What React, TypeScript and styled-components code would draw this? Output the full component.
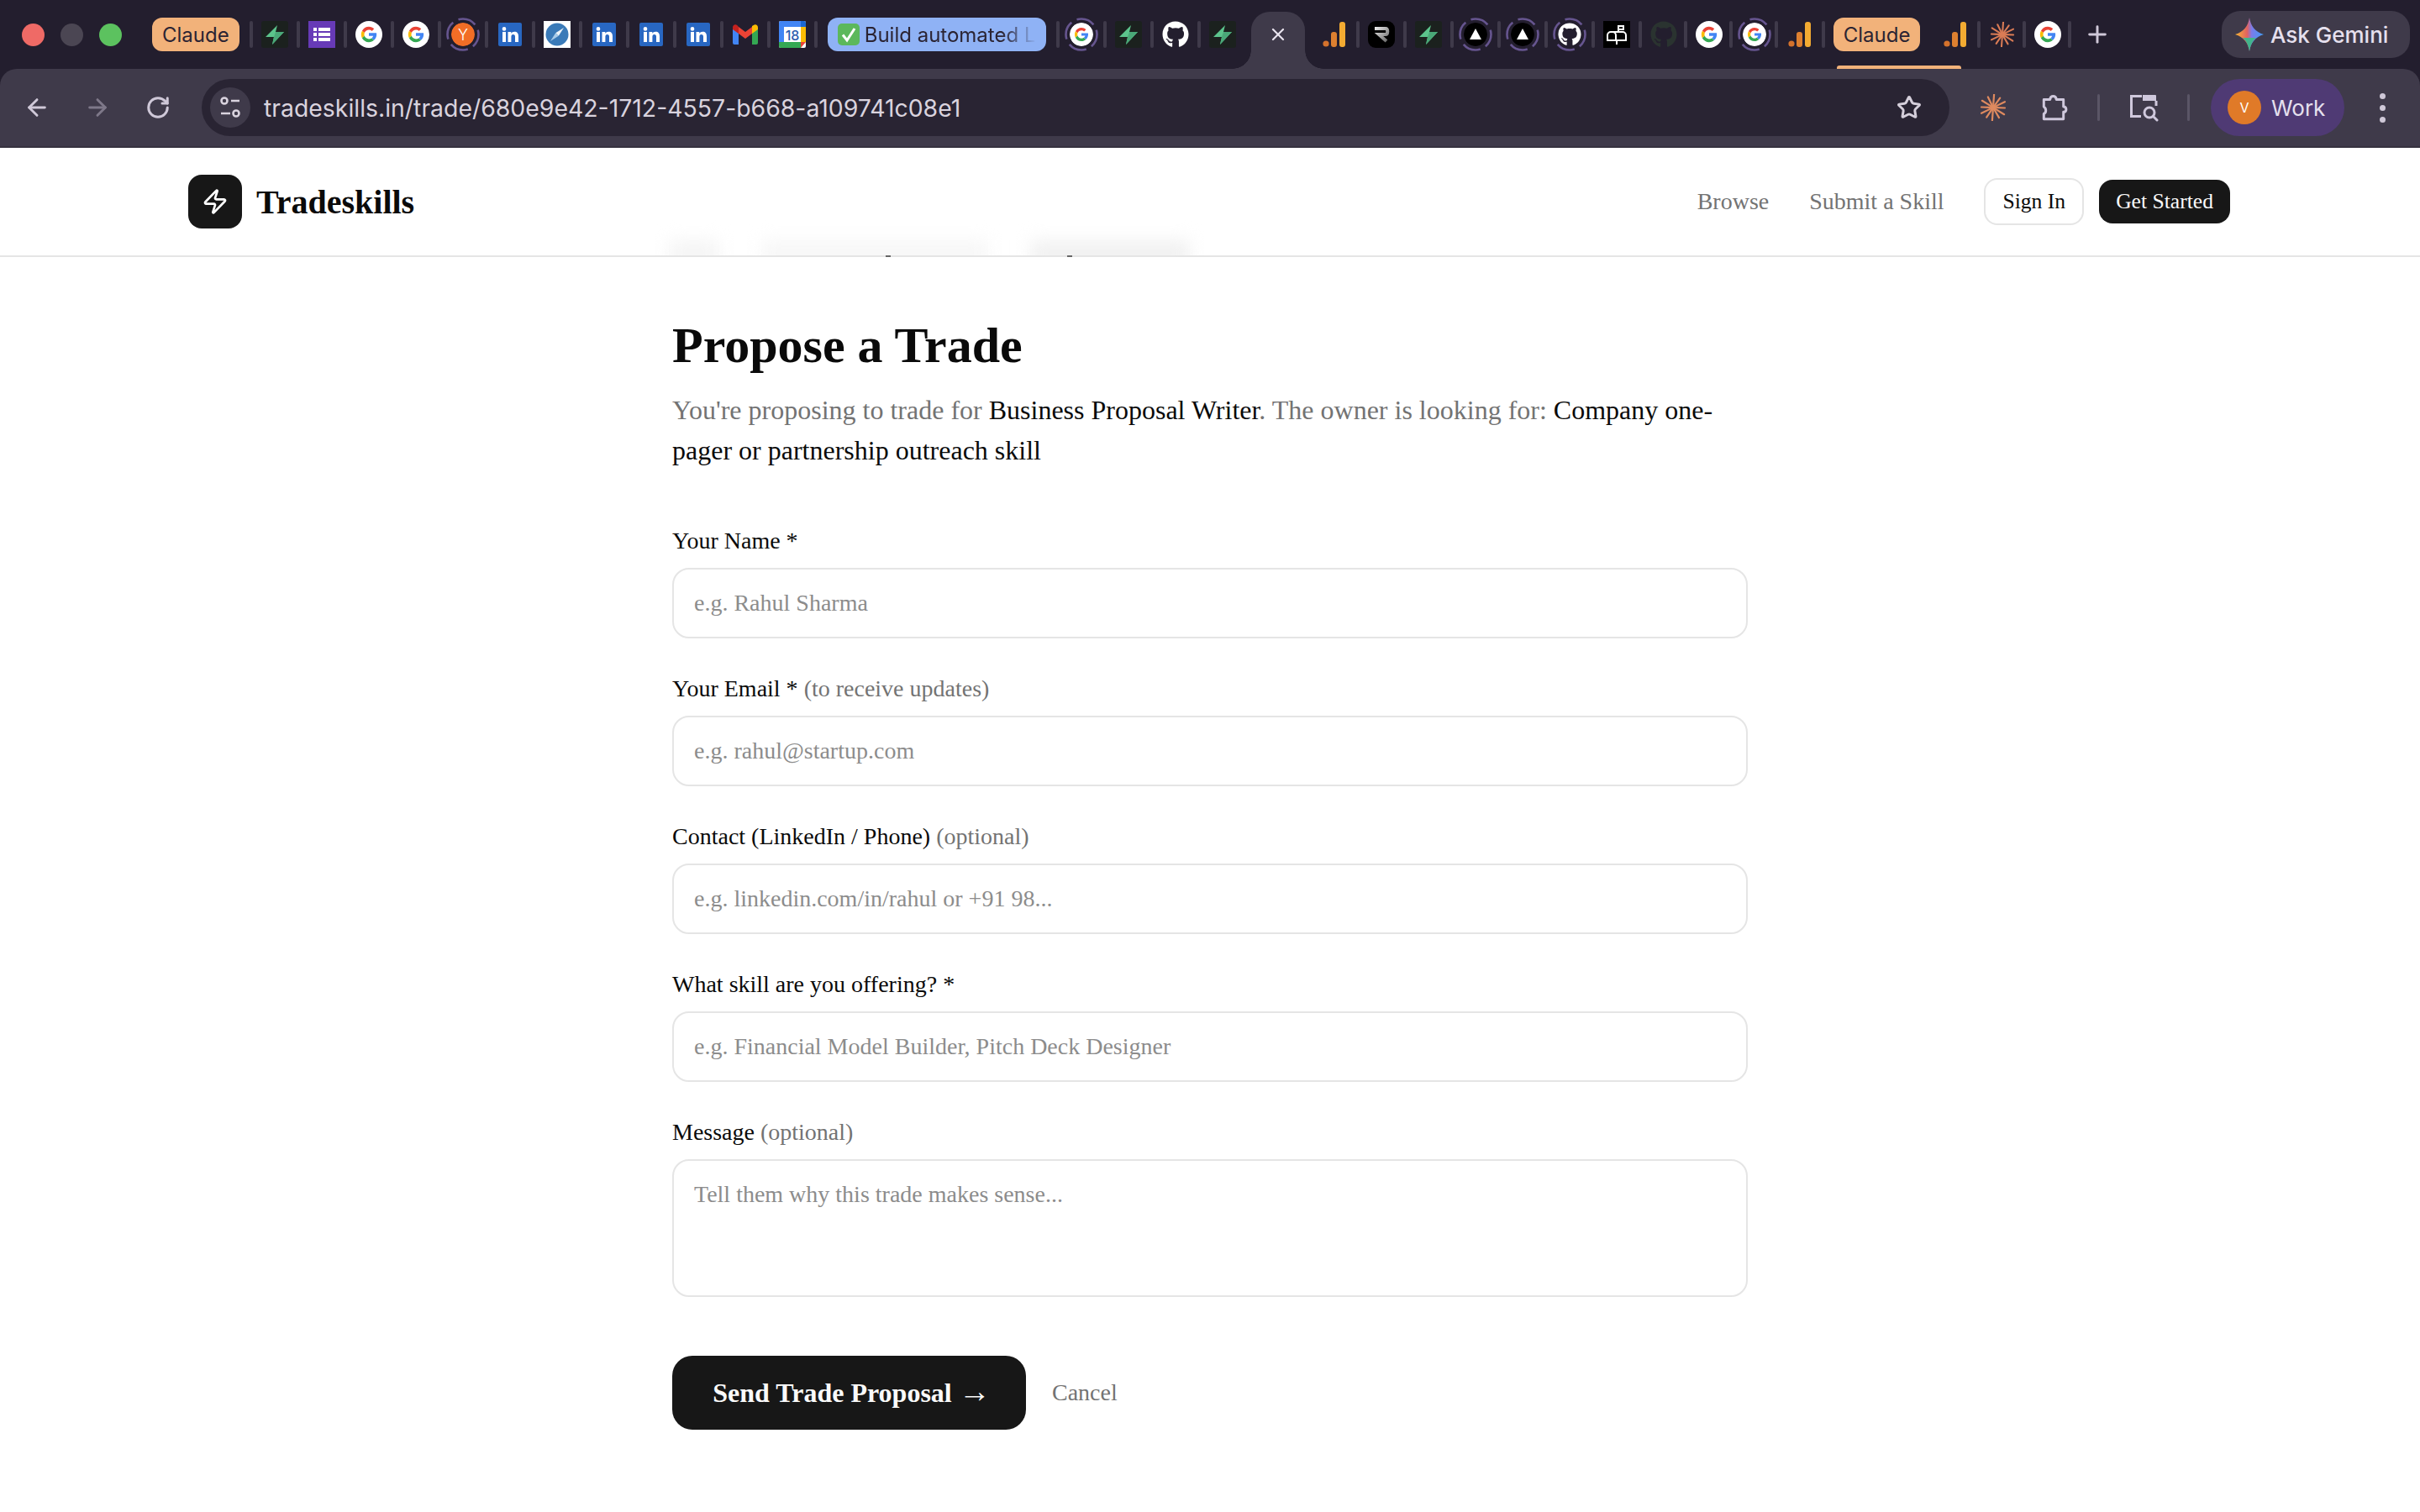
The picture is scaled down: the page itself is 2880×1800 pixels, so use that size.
import React from "react";
import styled, { createGlobalStyle } from "styled-components";
import { ArrowLeft, ArrowRight, Plus, RotateCw, Star, X, Zap } from "lucide-react";
import { FaGithub } from "react-icons/fa";

const GlobalStyle = createGlobalStyle`
  html, body {
    margin: 0;
    padding: 0;
    background: #fff;
  }
  body {
    width: 2880px;
    height: 1800px;
    overflow: hidden;
  }
  * {
    box-sizing: border-box;
  }
`;

const Frame = styled.div`
  width: 2880px;
  height: 1800px;
  display: flex;
  flex-direction: column;
  overflow: hidden;
`;

/* browser chrome */
const TabBar = styled.div`
  height: 82px;
  flex: none;
  display: flex;
  align-items: center;
  gap: 10px;
  padding: 0 12px 0 26px;
  background: #231e2e;
  font-family: Inter, "Noto Sans", sans-serif;
`;

const Lights = styled.div`
  display: flex;
  gap: 19px;
  margin-right: 24px;
`;

const Light = styled.span<{ $color: string }>`
  width: 27px;
  height: 27px;
  border-radius: 50%;
  background: ${(p) => p.$color};
`;

const Sep = styled.span<{ $tight?: boolean }>`
  width: 4px;
  height: 32px;
  flex: none;
  margin-left: ${(p) => (p.$tight ? -2 : 0)}px;
  border-radius: 2px;
  background: #3f3a4a;
`;

const GroupPill = styled.div<{ $bg: string }>`
  height: 40px;
  flex: none;
  display: flex;
  align-items: center;
  gap: 6px;
  padding: 0 12px;
  margin: 0 2px;
  border-radius: 12px;
  background: ${(p) => p.$bg};
  color: #2b2433;
  font-size: 24px;
  white-space: nowrap;
  overflow: hidden;
`;

const FadeText = styled.span`
  width: 204px;
  overflow: hidden;
  -webkit-mask-image: linear-gradient(90deg, #000 80%, transparent 100%);
  mask-image: linear-gradient(90deg, #000 80%, transparent 100%);
`;

const Fav = styled.span`
  position: relative;
  width: 32px;
  height: 32px;
  flex: none;
  display: flex;
  align-items: center;
  justify-content: center;
  svg {
    display: block;
  }
`;

const RingMark = styled.svg`
  position: absolute;
  left: -4px;
  top: -4px;
`;

const Shrunk = styled.span`
  width: 28px;
  height: 28px;
  display: flex;
  border-radius: 50%;
  overflow: hidden;
`;

const ActiveTab = styled.div`
  position: relative;
  align-self: flex-end;
  width: 64px;
  height: 68px;
  margin: 0 9px 0 8px;
  flex: none;
  display: flex;
  align-items: flex-start;
  justify-content: center;
  padding-top: 15px;
  border-radius: 22px 22px 0 0;
  background: #3f3a4a;
  color: #e8e3ee;
  &::before,
  &::after {
    content: "";
    position: absolute;
    bottom: 0;
    width: 22px;
    height: 22px;
  }
  &::before {
    left: -22px;
    background: radial-gradient(circle at 0 0, transparent 21.5px, #3f3a4a 22px);
  }
  &::after {
    right: -22px;
    background: radial-gradient(circle at 100% 0, transparent 21.5px, #3f3a4a 22px);
  }
`;

const ClaudeGroup = styled.div`
  position: relative;
  align-self: stretch;
  display: flex;
  align-items: center;
  gap: 24px;
  margin-left: -2px;
  &::after {
    content: "";
    position: absolute;
    left: 6px;
    right: 9px;
    bottom: 0;
    height: 4px;
    border-radius: 3px 3px 0 0;
    background: #f2b27a;
  }
`;

const NewTab = styled.span`
  display: flex;
  margin-left: 5px;
  color: #cfc8d8;
`;

const AskGemini = styled.div`
  margin-left: auto;
  height: 56px;
  width: 224px;
  flex: none;
  display: flex;
  align-items: center;
  gap: 8px;
  padding: 0 16px;
  border-radius: 22px;
  background: #3f3a4a;
  color: #e6e0ee;
  font-size: 26px;
  font-weight: 500;
  white-space: nowrap;
`;

const Toolbar = styled.div`
  height: 94px;
  flex: none;
  display: flex;
  align-items: center;
  padding: 0 0 2px 8px;
  background: #231e2e;
  font-family: Inter, "Noto Sans", sans-serif;
  position: relative;
  &::before {
    content: "";
    position: absolute;
    inset: 0;
    border-radius: 20px 20px 0 0;
    background: #3f3a4a;
    border-bottom: 2px solid #36323f;
  }
  & > * {
    position: relative;
  }
`;

const ToolButton = styled.span<{ $dim?: boolean; $color?: string }>`
  width: 72px;
  height: 68px;
  flex: none;
  display: flex;
  align-items: center;
  justify-content: center;
  color: ${(p) => p.$color ?? (p.$dim ? "#7e7889" : "#cfc8d8")};
`;

const Omnibox = styled.div`
  width: 2080px;
  height: 68px;
  flex: none;
  display: flex;
  align-items: center;
  gap: 16px;
  margin: 0 16px;
  padding: 0 33px 0 10px;
  border-radius: 34px;
  background: #292433;
  color: #d9d3de;
`;

const SiteInfo = styled.span`
  width: 48px;
  height: 48px;
  flex: none;
  display: flex;
  align-items: center;
  justify-content: center;
  border-radius: 50%;
  background: #3f3a4a;
`;

const Url = styled.span`
  flex: 1;
  font-size: 28.4px;
  white-space: nowrap;
`;

const ToolSep = styled.span`
  width: 3px;
  height: 32px;
  flex: none;
  margin: 0 16px;
  border-radius: 2px;
  background: #5a5566;
`;

const Profile = styled.div`
  width: 159px;
  height: 68px;
  flex: none;
  display: flex;
  align-items: center;
  gap: 12px;
  margin-left: 9px;
  padding-left: 20px;
  border-radius: 34px;
  background: #4f3a74;
  color: #e6e0ee;
  font-size: 26px;
`;

const Avatar = styled.span`
  width: 40px;
  height: 40px;
  display: flex;
  align-items: center;
  justify-content: center;
  border-radius: 50%;
  background: #e07a28;
  color: #fff;
  font-size: 16px;
`;

const Dots = styled.span`
  width: 72px;
  height: 68px;
  margin-left: 9px;
  display: flex;
  flex-direction: column;
  align-items: center;
  justify-content: center;
  gap: 7px;
  i {
    width: 7px;
    height: 7px;
    border-radius: 50%;
    background: #cfc8d8;
  }
`;

/* page */
const Page = styled.div`
  flex: 1;
  background: #fff;
  color: #0a0a0a;
  font-family: "Liberation Serif", "Times New Roman", serif;
`;

const Header = styled.header`
  position: relative;
  height: 130px;
  display: flex;
  align-items: center;
  justify-content: space-between;
  padding: 0 226px 0 224px;
  border-bottom: 2px solid #e5e5e5;
`;

const Brand = styled.div`
  position: relative;
  display: flex;
  align-items: center;
  gap: 17px;
  font-size: 40px;
  font-weight: 700;
`;

const BrandMark = styled.span`
  width: 64px;
  height: 64px;
  display: flex;
  align-items: center;
  justify-content: center;
  border-radius: 16px;
  background: #171717;
  color: #fff;
`;

const Ghost = styled.div`
  position: absolute;
  inset: 0;
  overflow: hidden;
  pointer-events: none;
`;

const GhostRow = styled.div`
  position: absolute;
  left: 796px;
  bottom: -12px;
  display: flex;
  filter: blur(10px);
`;

const GhostBlock = styled.span<{ $w: number; $gap: number; $tone: string }>`
  width: ${(p) => p.$w}px;
  height: 30px;
  margin-right: ${(p) => p.$gap}px;
  background: ${(p) => p.$tone};
`;

const Descenders = styled.div`
  position: absolute;
  left: 1054px;
  top: 100%;
  display: flex;
  gap: 210px;
  i {
    width: 6px;
    height: 2px;
    background: #666;
  }
`;

const Nav = styled.nav`
  position: relative;
  display: flex;
  align-items: center;
  gap: 48px;
  font-size: 28px;
  color: #737373;
`;

const NavButtons = styled.div`
  display: flex;
  align-items: center;
  gap: 18px;
`;

const NavButton = styled.span<{ $dark?: boolean }>`
  height: ${(p) => (p.$dark ? 52 : 56)}px;
  display: flex;
  align-items: center;
  padding: 0 20px;
  border-radius: 16px;
  border: ${(p) => (p.$dark ? "none" : "2px solid #e5e5e5")};
  background: ${(p) => (p.$dark ? "#171717" : "#fff")};
  color: ${(p) => (p.$dark ? "#fafafa" : "#0a0a0a")};
  font-size: 25.6px;
`;

const Main = styled.main`
  width: 1280px;
  margin: 0 auto;
  padding-top: 72px;
`;

const Title = styled.h1`
  margin: 0 0 20px;
  font-size: 60px;
  line-height: 66px;
  font-weight: 700;
`;

const Lead = styled.p`
  margin: 0 0 62px;
  font-size: 32px;
  line-height: 48px;
  color: #737373;
  strong {
    font-weight: 400;
    color: #0a0a0a;
  }
`;

const Form = styled.form`
  display: flex;
  flex-direction: column;
  gap: 38px;
`;

const Field = styled.label`
  display: flex;
  flex-direction: column;
  gap: 10px;
`;

const LabelText = styled.span`
  font-size: 28px;
  line-height: 44px;
  small {
    font-size: 28px;
    color: #737373;
  }
`;

const fieldStyles = `
  width: 100%;
  border: 2px solid #e5e5e5;
  border-radius: 20px;
  background: #fff;
  font-family: "Liberation Serif", "Times New Roman", serif;
  font-size: 28px;
  outline: none;
  &::placeholder {
    color: #8c8c8c;
    opacity: 1;
  }
`;

const TextInput = styled.input`
  ${fieldStyles}
  height: 84px;
  padding: 0 24px;
`;

const TextArea = styled.textarea`
  ${fieldStyles}
  height: 164px;
  padding: 22px 24px;
  line-height: 36px;
  resize: none;
  display: block;
`;

const Actions = styled.div`
  display: flex;
  align-items: center;
  gap: 31px;
  margin-top: 32px;
`;

const SendButton = styled.button`
  width: 421px;
  height: 88px;
  border: 0;
  border-radius: 24px;
  background: #171717;
  color: #fafafa;
  font-family: "Liberation Serif", "Times New Roman", serif;
  font-size: 32px;
  font-weight: 700;
  span {
    font-size: 38px;
    line-height: 0;
    font-weight: 400;
    margin-right: -6px;
  }
`;

const CancelLink = styled.span`
  font-size: 28px;
  color: #737373;
`;

/* favicons */
const GoogleFav = () => (
  <svg width="32" height="32" viewBox="0 0 32 32">
    <circle cx="16" cy="16" r="16" fill="#fff" />
    <g transform="translate(5 5) scale(0.458)">
      <path fill="#EA4335" d="M6.306 14.691l6.571 4.819C14.655 15.108 18.961 12 24 12c3.059 0 5.842 1.154 7.961 3.039l5.657-5.657C34.046 6.053 29.268 4 24 4 16.318 4 9.656 8.337 6.306 14.691z" />
      <path fill="#FBBC05" d="M4 24c0 3.3.8 6.4 2.2 9.08l6.52-5.03A12 12 0 0 1 12 24c0-1.6.32-3.1.88-4.49l-6.57-4.82A19.9 19.9 0 0 0 4 24z" />
      <path fill="#34A853" d="M24 44c5.166 0 9.86-1.977 13.409-5.192l-6.19-5.238A11.91 11.91 0 0 1 24 36c-5.202 0-9.619-3.317-11.283-7.946l-6.522 5.025C9.505 39.556 16.227 44 24 44z" />
      <path fill="#4285F4" d="M43.611 20.083H42V20H24v8h11.303a12.04 12.04 0 0 1-4.087 5.571l6.193 5.237C36.971 39.205 44 34 44 24c0-1.341-.138-2.65-.389-3.917z" />
    </g>
  </svg>
);

const SupabaseFav = () => (
  <svg width="32" height="32" viewBox="0 0 32 32">
    <rect width="32" height="32" rx="3" fill="#1b211e" />
    <path d="M19 5 5 19h10l-2 9 14-15H17z" fill="#5cc48c" />
    <path d="M15 19l-2 9 14-15H17z" fill="#4aa878" />
  </svg>
);

const FormsFav = () => (
  <svg width="32" height="32" viewBox="0 0 32 32">
    <rect width="32" height="32" fill="#673ab7" />
    <g fill="#fff">
      <rect x="6" y="8" width="4" height="4" />
      <rect x="12" y="8" width="14" height="4" />
      <rect x="6" y="14" width="4" height="4" />
      <rect x="12" y="14" width="14" height="4" />
      <rect x="6" y="20" width="4" height="4" />
      <rect x="12" y="20" width="14" height="4" />
    </g>
  </svg>
);

const YcFav = () => (
  <svg width="28" height="28" viewBox="0 0 28 28">
    <circle cx="14" cy="14" r="14" fill="#f26d26" />
    <text x="14" y="20.5" textAnchor="middle" fontSize="18" fontFamily="Inter, sans-serif" fontWeight="300" fill="#fff">
      Y
    </text>
  </svg>
);

const LinkedInFav = () => (
  <svg width="28" height="28" viewBox="0 0 28 28">
    <rect width="28" height="28" rx="2" fill="#2867c2" />
    <g fill="#fff">
      <circle cx="7" cy="7.4" r="2.3" />
      <rect x="5" y="11" width="4" height="12" />
      <path d="M11.5 11h3.8v1.7c.8-1.3 2.2-2 3.9-2 3.3 0 4.8 2 4.8 5.3V23h-4v-6.2c0-1.8-.7-2.8-2.3-2.8s-2.3 1.1-2.3 2.9V23h-3.9z" />
    </g>
  </svg>
);

const SafariFav = () => (
  <svg width="32" height="32" viewBox="0 0 32 32">
    <rect width="32" height="32" fill="#fff" />
    <circle cx="16" cy="16" r="13.5" fill="#3a7ab8" />
    <path d="M24 8 17.8 17.8 14.2 14.2z" fill="#fff" opacity=".9" />
    <path d="M8 24 14.2 14.2 17.8 17.8z" fill="#a9cbe8" />
  </svg>
);

const GmailFav = () => (
  <svg width="30" height="24" viewBox="0 0 30 24">
    <path d="M0 5v17a2 2 0 0 0 2 2h5V10z" fill="#4285f4" />
    <path d="M30 5v17a2 2 0 0 1-2 2h-5V10z" fill="#34a853" />
    <path d="M23 2v9l7-5V4c0-3.4-3-4.6-5.2-3z" fill="#fbbc04" />
    <path d="M7 11V3l8 6 8-6v8l-8 6z" fill="#ea4335" />
    <path d="M0 4v2l7 5V3L5.2 1C3 -.6 0 .6 0 4z" fill="#c5221f" />
  </svg>
);

const CalendarFav = () => (
  <svg width="32" height="32" viewBox="0 0 32 32">
    <rect width="32" height="32" rx="2" fill="#fff" />
    <path d="M0 7V2a2 2 0 0 1 2-2h24v7z" fill="#4285f4" />
    <path d="M26 0h4a2 2 0 0 1 2 2v5h-6z" fill="#1a67d2" />
    <rect x="26" y="7" width="6" height="18" fill="#fbbc04" />
    <rect y="7" width="6" height="18" fill="#4285f4" />
    <path d="M0 25h26v7H2a2 2 0 0 1-2-2z" fill="#34a853" />
    <path d="M26 32v-7h6z" fill="#ea4335" />
    <text x="16" y="22.5" textAnchor="middle" fontSize="16" fontFamily="Inter, sans-serif" fill="#2a5db0" fontWeight="500">
      18
    </text>
  </svg>
);

const AnalyticsFav = () => (
  <svg width="28" height="32" viewBox="0 0 28 32">
    <circle cx="4" cy="27" r="3.6" fill="#d4722c" />
    <rect x="10" y="13" width="7" height="18" rx="3" fill="#dd8030" />
    <rect x="20" y="1" width="7" height="30" rx="3" fill="#f3ab32" />
  </svg>
);

const RFav = () => (
  <svg width="32" height="32" viewBox="0 0 32 32">
    <defs>
      <linearGradient id="rGrad" x1="0" y1="0" x2="1" y2="1">
        <stop offset="0" stopColor="#e8e8e8" />
        <stop offset="1" stopColor="#6b6b6b" />
      </linearGradient>
    </defs>
    <rect width="32" height="32" rx="9" fill="#000" />
    <path d="M8 9h13c3 0 3 7 0 7h-8l9 8" fill="none" stroke="url(#rGrad)" strokeWidth="4" />
  </svg>
);

const VercelFav = () => (
  <svg width="28" height="28" viewBox="0 0 28 28">
    <circle cx="14" cy="14" r="14" fill="#000" />
    <path d="M14 7 21 20H7z" fill="#fff" />
  </svg>
);

const GithubFav = ({ color = "#fff", size = 32 }: { color?: string; size?: number }) => (
  <FaGithub size={size} color={color} />
);

const MailboxFav = () => (
  <svg width="32" height="32" viewBox="0 0 32 32">
    <rect width="32" height="32" fill="#000" />
    <path d="M9 13h14a4 4 0 0 1 4 4v6H5v-6a4 4 0 0 1 4-4zM11 13a4 4 0 0 1 4 4v6M18 14V6h6v4h-6M16 23v5" fill="none" stroke="#fff" strokeWidth="2" />
  </svg>
);

const Burst = ({ size = 30, color = "#d97b55" }: { size?: number; color?: string }) => (
  <svg width={size} height={size} viewBox="0 0 32 32">
    {[4, 36, 64, 92, 122, 150, 184, 214, 244, 272, 302, 334].map((a, i) => (
      <line
        key={a}
        x1="16"
        y1={i % 3 ? 14 : 12}
        x2="16"
        y2={i % 2 ? 2 : 0.5}
        stroke={color}
        strokeWidth="2.2"
        strokeLinecap="round"
        transform={`rotate(${a} 16 16)`}
      />
    ))}
    <circle cx="16" cy="16" r="3.5" fill={color} />
  </svg>
);

const Ring = () => (
  <RingMark width="40" height="40" viewBox="0 0 40 40">
    <circle cx="20" cy="20" r="18.5" fill="none" stroke="#66558f" strokeWidth="2.6" strokeDasharray="22 7" strokeDashoffset="6" />
  </RingMark>
);

const GeminiStar = () => (
  <svg width="34" height="40" viewBox="0 0 34 40">
    <defs>
      <linearGradient id="gemGrad" x1="0" y1="0" x2="1" y2="0">
        <stop offset="0" stopColor="#f7b733" />
        <stop offset="0.42" stopColor="#e2625f" />
        <stop offset="0.58" stopColor="#7b7bea" />
        <stop offset="1" stopColor="#3f9cf5" />
      </linearGradient>
    </defs>
    <path d="M17 0c1.5 10 7 17 17 20-10 3-15.500 10-17 20C15.500 30 10 23 0 20 10 17 15.500 10 17 0z" fill="url(#gemGrad)" />
    <path d="M9 24c4 3 6.500 8 8 16 1.500-8 4-13 8-16z" fill="#41b58c" />
  </svg>
);

const CheckBox = () => (
  <svg width="26" height="26" viewBox="0 0 26 26">
    <rect width="26" height="26" rx="5" fill="#5cb85c" />
    <path d="M6 13.500 11 20 20 6" fill="none" stroke="#fff" strokeWidth="3" />
  </svg>
);

const SiteTune = () => (
  <svg width="26" height="28" viewBox="0 0 26 28" fill="none" stroke="#d9d3de" strokeWidth="2.6">
    <circle cx="6" cy="6" r="3.500" />
    <path d="M14 6h10M2 21h11" />
    <circle cx="20" cy="21" r="3.500" />
  </svg>
);

const PuzzleIcon = () => (
  <svg width="34" height="34" viewBox="0 0 32 32" fill="#cfc8dc" stroke="#cfc8dc" strokeWidth="2.8" strokeLinejoin="round">
    <path fill="none" d="M5 7h7c0-5 7-5 7 0h8v8c4 0 4 6 0 6v8H5v-6c3-1 3-6 0-8z" />
  </svg>
);

const PageSearchIcon = () => (
  <svg width="36" height="36" viewBox="0 0 36 36">
    <path d="M17 3h15a1 1 0 0 1 1 1v6H17z" fill="#cfc8dc" />
    <path d="M16 4.500H3.500v24H15M33 10v6" fill="none" stroke="#cfc8dc" strokeWidth="3" />
    <circle cx="25" cy="24" r="6" fill="none" stroke="#cfc8dc" strokeWidth="3" />
    <path d="M29.500 28.500 34 33" stroke="#cfc8dc" strokeWidth="3" strokeLinecap="round" />
  </svg>
);

const Ringed = ({ children }: { children: React.ReactNode }) => (
  <Fav>
    <Shrunk>{children}</Shrunk>
    <Ring />
  </Fav>
);

function GoogleScaled() {
  return (
    <svg width="28" height="28" viewBox="0 0 32 32">
      <GoogleFav />
    </svg>
  );
}

const firstRun = [
  <SupabaseFav />,
  <FormsFav />,
  <GoogleFav />,
  <GoogleFav />,
  <Ringed><YcFav /></Ringed>,
  <LinkedInFav />,
  <SafariFav />,
  <LinkedInFav />,
  <LinkedInFav />,
  <LinkedInFav />,
  <GmailFav />,
  <CalendarFav />,
];

const secondRun = [
  <Ringed><GoogleScaled /></Ringed>,
  <SupabaseFav />,
  <GithubFav />,
  <SupabaseFav />,
];

const thirdRun = [
  <RFav />,
  <SupabaseFav />,
  <Ringed><VercelFav /></Ringed>,
  <Ringed><VercelFav /></Ringed>,
  <Ringed><GithubFav size={28} /></Ringed>,
  <MailboxFav />,
  <GithubFav color="#2a3330" />,
  <GoogleFav />,
  <Ringed><GoogleScaled /></Ringed>,
  <AnalyticsFav />,
];

const fields = [
  { label: "Your Name *", placeholder: "e.g. Rahul Sharma" },
  { label: "Your Email *", note: "(to receive updates)", placeholder: "e.g. rahul@startup.com" },
  { label: "Contact (LinkedIn / Phone)", note: "(optional)", placeholder: "e.g. linkedin.com/in/rahul or +91 98..." },
  { label: "What skill are you offering? *", placeholder: "e.g. Financial Model Builder, Pitch Deck Designer" },
];

export default function App() {
  return (
    <Frame>
      <GlobalStyle />
      <TabBar>
        <Lights>
          <Light $color="#ef6a66" />
          <Light $color="#4b4653" />
          <Light $color="#5cc25f" />
        </Lights>
        <GroupPill $bg="#f2b27a">Claude</GroupPill>
        {firstRun.map((icon, i) => (
          <React.Fragment key={i}>
            <Sep />
            <Fav>{icon}</Fav>
          </React.Fragment>
        ))}
        <Sep />
        <GroupPill $bg="#8fb2f5">
          <CheckBox />
          <FadeText>Build automated L</FadeText>
        </GroupPill>
        {secondRun.map((icon, i) => (
          <React.Fragment key={i}>
            <Sep />
            <Fav>{icon}</Fav>
          </React.Fragment>
        ))}
        <ActiveTab>
          <X size={24} strokeWidth={2.2} />
        </ActiveTab>
        <Fav><AnalyticsFav /></Fav>
        {thirdRun.map((icon, i) => (
          <React.Fragment key={i}>
            <Sep $tight={i >= 7} />
            <Fav>{icon}</Fav>
          </React.Fragment>
        ))}
        <Sep />
        <ClaudeGroup>
          <GroupPill $bg="#f2b27a">Claude</GroupPill>
          <Fav><AnalyticsFav /></Fav>
        </ClaudeGroup>
        <Sep />
        <Fav><Burst /></Fav>
        <Sep $tight />
        <Fav><GoogleFav /></Fav>
        <Sep $tight />
        <NewTab><Plus size={32} strokeWidth={2.2} /></NewTab>
        <AskGemini>
          <GeminiStar />
          Ask Gemini
        </AskGemini>
      </TabBar>

      <Toolbar>
        <ToolButton><ArrowLeft size={32} strokeWidth={2.2} /></ToolButton>
        <ToolButton $dim><ArrowRight size={32} strokeWidth={2.2} /></ToolButton>
        <ToolButton><RotateCw size={30} strokeWidth={2.4} /></ToolButton>
        <Omnibox>
          <SiteInfo><SiteTune /></SiteInfo>
          <Url>tradeskills.in/trade/680e9e42-1712-4557-b668-a109741c08e1</Url>
          <Star size={30} strokeWidth={2.4} color="#d5cfdb" />
        </Omnibox>
        <ToolButton><Burst size={32} color="#df8a5f" /></ToolButton>
        <ToolButton><PuzzleIcon /></ToolButton>
        <ToolSep />
        <ToolButton><PageSearchIcon /></ToolButton>
        <ToolSep />
        <Profile>
          <Avatar>V</Avatar>
          Work
        </Profile>
        <Dots>
          <i />
          <i />
          <i />
        </Dots>
      </Toolbar>

      <Page>
        <Header>
          <Ghost>
            <GhostRow>
              <GhostBlock $w={60} $gap={50} $tone="#f5f5f5" />
              <GhostBlock $w={270} $gap={50} $tone="#f7f7f7" />
              <GhostBlock $w={190} $gap={0} $tone="#f1f1f1" />
            </GhostRow>
          </Ghost>
          <Descenders>
            <i />
            <i />
          </Descenders>
          <Brand>
            <BrandMark><Zap size={32} strokeWidth={2} /></BrandMark>
            Tradeskills
          </Brand>
          <Nav>
            <span>Browse</span>
            <span>Submit a Skill</span>
            <NavButtons>
              <NavButton>Sign In</NavButton>
              <NavButton $dark>Get Started</NavButton>
            </NavButtons>
          </Nav>
        </Header>
        <Main>
          <Title>Propose a Trade</Title>
          <Lead>
            You're proposing to trade for <strong>Business Proposal Writer</strong>. The owner is looking for:{" "}
            <strong>Company one-pager or partnership outreach skill</strong>
          </Lead>
          <Form>
            {fields.map((f) => (
              <Field key={f.label}>
                <LabelText>
                  {f.label} {f.note && <small>{f.note}</small>}
                </LabelText>
                <TextInput placeholder={f.placeholder} />
              </Field>
            ))}
            <Field>
              <LabelText>
                Message <small>(optional)</small>
              </LabelText>
              <TextArea placeholder="Tell them why this trade makes sense..." />
            </Field>
            <Actions>
              <SendButton type="button">
                Send Trade Proposal <span>→</span>
              </SendButton>
              <CancelLink>Cancel</CancelLink>
            </Actions>
          </Form>
        </Main>
      </Page>
    </Frame>
  );
}
